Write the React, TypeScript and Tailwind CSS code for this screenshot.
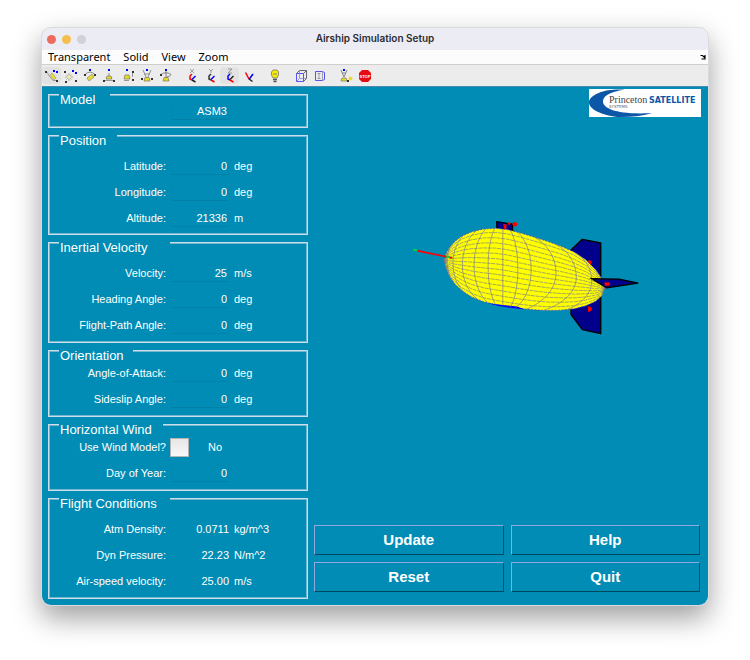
import type { ReactNode } from "react";

type Row = {
  label: string;
  value: string;
  unit?: string;
  kind?: "static" | "check";
};

type PanelData = {
  title: string;
  legend: string;
  pad: string;
  rows: Row[];
};

const panels: PanelData[] = [
  {
    title: "Model",
    legend: "w-[51px]",
    pad: "pt-[3px] pb-[3px]",
    rows: [{ label: "", value: "ASM3" }],
  },
  {
    title: "Position",
    legend: "w-[58px]",
    pad: "pt-[17px] pb-[3px]",
    rows: [
      { label: "Latitude:", value: "0", unit: "deg" },
      { label: "Longitude:", value: "0", unit: "deg" },
      { label: "Altitude:", value: "21336", unit: "m" },
    ],
  },
  {
    title: "Inertial Velocity",
    legend: "w-[111px]",
    pad: "pt-[17px] pb-[4px]",
    rows: [
      { label: "Velocity:", value: "25", unit: "m/s" },
      { label: "Heading Angle:", value: "0", unit: "deg" },
      { label: "Flight-Path Angle:", value: "0", unit: "deg" },
    ],
  },
  {
    title: "Orientation",
    legend: "w-[74px]",
    pad: "pt-[9px] pb-[4px]",
    rows: [
      { label: "Angle-of-Attack:", value: "0", unit: "deg" },
      { label: "Sideslip Angle:", value: "0", unit: "deg" },
    ],
  },
  {
    title: "Horizontal Wind",
    legend: "w-[104px]",
    pad: "pt-[9px] pb-[4px]",
    rows: [
      { label: "Use Wind Model?", value: "No", kind: "check" },
      { label: "Day of Year:", value: "0" },
    ],
  },
  {
    title: "Flight Conditions",
    legend: "w-[111px]",
    pad: "pt-[17px] pb-[4px]",
    rows: [
      { label: "Atm Density:", value: "0.0711", unit: "kg/m^3", kind: "static" },
      { label: "Dyn Pressure:", value: "22.23", unit: "N/m^2", kind: "static" },
      { label: "Air-speed velocity:", value: "25.00", unit: "m/s", kind: "static" },
    ],
  },
];

function Field({ row, id }: { row: Row; id: string }) {
  return (
    <div className="flex h-[26px] items-center">
      <label htmlFor={id} className="w-[117px] shrink-0 text-right whitespace-nowrap">
        {row.label}
      </label>
      {row.kind === "check" ? (
        <>
          <input
            id={id}
            type="checkbox"
            className="ml-1 size-[19px] appearance-none border border-[#b5b5b5] bg-linear-to-b from-[#e6e6e6] to-[#f8f8f8]"
          />
          <span className="ml-[19px]">{row.value}</span>
        </>
      ) : row.kind === "static" ? (
        <output id={id} className="ml-1 w-[59px] text-right">
          {row.value}
        </output>
      ) : (
        <input
          id={id}
          aria-label={row.label || "Model name"}
          defaultValue={row.value}
          className="ml-[5px] h-[18px] w-[58px] border border-[#0089b1] border-b-[#0081a7] bg-transparent pr-px text-right outline-none"
        />
      )}
      {row.unit && <span className="ml-[5px]">{row.unit}</span>}
    </div>
  );
}

function Panel({ panel }: { panel: PanelData }) {
  return (
    <fieldset
      className={`relative min-w-0 border border-[#cbdfea] shadow-[inset_0_0_0_1px_#74b6d0] ${panel.pad}`}
    >
      <legend
        className={`absolute -top-px left-[10px] bg-[#008cb4] pl-px text-[13px] leading-[12px] whitespace-nowrap ${panel.legend}`}
      >
        {panel.title}
      </legend>
      {panel.rows.map((row, i) => (
        <Field key={i} row={row} id={`${panel.title.replace(/ /g, "-")}-${i}`} />
      ))}
    </fieldset>
  );
}

/* Hull silhouette, sampled as upper and lower edges along x. */
const upper: [number, number][] = [
  [133, 180], [137, 160], [148, 140], [165, 122], [185, 107], [215, 94], [250, 86], [285, 84],
  [320, 88], [360, 98], [400, 110], [440, 123], [480, 137], [520, 155], [555, 178], [585, 208],
  [604, 236], [612, 262],
];
const lower: [number, number][] = [
  [133, 180], [137, 203], [148, 229], [165, 252], [185, 271], [215, 290], [250, 304], [285, 312],
  [320, 318], [360, 324], [400, 328], [440, 330], [480, 329], [520, 325], [555, 316], [585, 302],
  [604, 285], [612, 262],
];

function edge(points: [number, number][], x: number) {
  for (let i = 1; i < points.length; i++) {
    const [x0, y0] = points[i - 1];
    const [x1, y1] = points[i];
    if (x <= x1) return y0 + ((y1 - y0) * (x - x0)) / (x1 - x0);
  }
  return points[points.length - 1][1];
}

const hull = [...upper, ...[...lower].reverse()].map((p) => p.join(",")).join(" ");

const stringers = Array.from({ length: 14 }, (_, i) => {
  const f = (i + 0.8) / 14.6;
  return upper
    .map(([x]) => `${x},${(edge(upper, x) + f * (edge(lower, x) - edge(upper, x))).toFixed(1)}`)
    .join(" ");
});

/* Each ring: x at its upper end, x of the bulge, x at its lower end. */
const rings = [
  [160, 140, 156], [190, 158, 192], [228, 186, 232], [256, 221, 262], [283, 263, 285],
  [307, 307, 307], [330, 352, 330], [352, 392, 346], [402, 466, 378], [465, 527, 430], [520, 573, 500],
].map(([a, m, b]) => {
  const ya = edge(upper, a);
  const yb = edge(lower, b);
  const h = yb - ya;
  const ym = ya + h * 0.5;
  return `M${a} ${ya}C${a + (m - a) * 0.6} ${ya + h * 0.1} ${m} ${ym - h * 0.22} ${m} ${ym}S${b + (m - b) * 0.6} ${yb - h * 0.1} ${b} ${yb}`;
});

function Airship() {
  return (
    <svg
      viewBox="314 117 386 407"
      role="img"
      aria-label="Airship model"
      className="h-0 w-full flex-1"
    >
      <g transform="translate(400 200) scale(.33333)">
        <g fill="#00008b" stroke="#000" strokeWidth="4" strokeLinejoin="round">
          <path d="M289 64L336 72V96L289 88Z" />
          <path d="M511 200V149L545 117L600 128V250Z" />
          <path d="M511 300V342L545 387L600 399V280Z" />
        </g>
        <polygon points={hull} fill="#ff0" stroke="#5050c0" strokeWidth="2.5" strokeDasharray="6 4" />
        <g fill="#f00">
          <circle cx="343" cy="72" r="7" />
          <circle cx="326" cy="70" r="4" />
          <path d="M308 72h10v12l-7 4z" />
          <path d="M561 182q6-6 12 2l-2 10z" />
          <path d="M562 317l11 4v9l-11 5z" />
        </g>
        <path d="M262 308Q310 322 372 326L350 318L300 313Z" fill="#00f" />
        <g fill="none" stroke="#7c7c88" strokeWidth="2">
          {stringers.map((p, i) => (
            <polyline key={i} points={p} strokeDasharray="12 2" />
          ))}
        </g>
        <g fill="none" stroke="#77779a" strokeWidth="2">
          {rings.map((d, i) => (
            <path key={i} d={d} />
          ))}
        </g>
        <path d="M573 235L655 236L712 248L618 262Z" fill="#00008b" stroke="#000" strokeWidth="4" />
        <path d="M610 246h18l-3 10h-12z" fill="#f00" />
        <path d="M50 151L156 173" stroke="#f00" strokeWidth="5" />
        <path d="M39 148L51 151M138 169L148 171" stroke="#0d3" strokeWidth="5" />
      </g>
    </svg>
  );
}

const dot = (x: number, y: number, fill = "#333", s = 2) => (
  <rect key={`${x}-${y}`} x={x} y={y} width={s} height={s} fill={fill} />
);

function axes(letter: "X" | "Y" | "Z") {
  const hook = { X: "#f00", Y: "#333", Z: "#00f" }[letter];
  const arm = { X: "#00f", Y: "#00f", Z: "#222" }[letter];
  const foot = { X: "#222", Y: "#f00", Z: "#f00" }[letter];
  const glyph = { X: "M6 1L10 5M10 1L6 5", Y: "M6 1L8 3L10 1M8 3V5", Z: "M6 1H10L6 5H10" }[letter];
  return (
    <g fill="none" strokeWidth="1.500">
      <path d={glyph} stroke="#888" strokeWidth=".8" />
      <path d="M8 6L6 8V11L8 12" stroke={hook} />
      <path d="M11.500 8L8 11.500" stroke={arm} />
      <path d="M8 12L11.500 14" stroke={foot} />
    </g>
  );
}

const yellow = "#e8dc28";

const icons: { name: string; on?: boolean; art: ReactNode }[][] = [
  [
    {
      name: "Orbit camera",
      on: true,
      art: (
        <>
          <path d="M2.500 3.500L6 9L9 12.500H13" fill="none" stroke="#999" />
          <path d="M6 7L8 5L12 10L10 12Z" fill={yellow} stroke="#998" strokeWidth=".6" />
          {dot(1, 3)}{dot(12, 12)}{dot(9, 2, "#00f")}{dot(12, 3, "#00f")}
        </>
      ),
    },
    {
      name: "Orbit scene light",
      art: (
        <>
          <path d="M6 5V13M2 9H10M3.500 6.500L8.500 11.500M8.500 6.500L3.500 11.500" stroke="#888" strokeWidth=".7" />
          <circle cx="6" cy="9" r="1.800" fill="#f4f0a0" />
          {dot(1, 3)}{dot(2, 13)}{dot(12, 12)}{dot(9, 2, "#00f")}{dot(12, 4, "#00f")}
        </>
      ),
    },
    {
      name: "Pan or tilt camera",
      art: (
        <>
          <path d="M2.500 7Q8 1 13.500 7" fill="none" stroke="#888" />
          <path d="M5 10L10 6L12 9L7 13Z" fill={yellow} stroke="#887" strokeWidth=".7" />
          {dot(7, 1, "#00f")}{dot(2, 6)}{dot(12, 6)}
        </>
      ),
    },
    {
      name: "Move camera horizontally",
      art: (
        <>
          <path d="M3 12.500H13" stroke="#999" />
          <path d="M6 8H10L11 11H5Z" fill={yellow} stroke="#776" strokeWidth=".7" />
          <path d="M8 5V8" stroke="#888" />
          {dot(7, 1, "#00f")}{dot(2, 12)}{dot(12, 12)}
        </>
      ),
    },
    {
      name: "Move camera forward",
      art: (
        <>
          <path d="M5 7H9L10 11H4Z" fill={yellow} stroke="#776" strokeWidth=".7" />
          <path d="M12.500 4V9M4 12.500H9" stroke="#999" />
          {dot(6, 1, "#00f")}{dot(12, 3)}{dot(12, 11)}
        </>
      ),
    },
    {
      name: "Zoom camera",
      art: (
        <>
          <path d="M4 2L7 9M12 2L9 9M5 6H11" stroke="#888" strokeWidth=".9" fill="none" />
          <path d="M6 9.500H10L11 13H5Z" fill={yellow} stroke="#776" strokeWidth=".7" />
          {dot(7, 1, "#00f")}{dot(2, 10)}{dot(12, 10)}
        </>
      ),
    },
    {
      name: "Roll camera",
      art: (
        <>
          <path d="M3 6.500Q8 3 13 6.500Q12 9 8.500 9M8 3V10" fill="none" stroke="#777" strokeWidth=".9" />
          <path d="M6 9.500H10L11 13H5Z" fill={yellow} stroke="#776" strokeWidth=".7" />
          {dot(7, 1, "#00f")}{dot(2, 6)}
        </>
      ),
    },
  ],
  [
    { name: "Principal axis X", art: axes("X") },
    { name: "Principal axis Y", art: axes("Y") },
    { name: "Principal axis Z", on: true, art: axes("Z") },
    {
      name: "No principal axis",
      art: (
        <g strokeWidth="1.500" fill="none">
          <path d="M4.500 4.500L8 11" stroke="#f00" />
          <path d="M12 6L8 11.500" stroke="#00f" />
          <path d="M8 11L11.500 13.500" stroke="#222" />
        </g>
      ),
    },
  ],
  [
    {
      name: "Scene light",
      art: (
        <>
          <path d="M6 10L4.500 7V4L6 2H10L11.500 4V7L10 10Z" fill="#f5ee00" stroke="#776" strokeWidth=".8" />
          <path d="M6 6H10" stroke="#886" />
          <path d="M6 11.500H10M6.500 13.500H9.500" stroke="#555" strokeWidth="1.400" />
        </>
      ),
    },
  ],
  [
    {
      name: "Orthographic projection",
      art: (
        <g fill="none">
          <path d="M3.500 5.500H10.500V13.500H3.500Z" stroke="#55e" />
          <path d="M3.500 5.500L6.500 2.500H13.500V10.500L10.500 13.500M10.500 5.500L13.500 2.500" stroke="#667" />
          <path d="M6.500 3V10.500H13M6.500 10.500L3.500 13.500" stroke="#77e" strokeWidth=".7" />
        </g>
      ),
    },
    {
      name: "Perspective projection",
      art: (
        <g fill="none">
          <path d="M3.500 3.500H10.500L12.500 4.500V11.500L10.500 12.500H3.500Z" stroke="#55e" />
          <path d="M10.500 3.500V12.500M7 5V11M5.500 5.500H8.500M5.500 10.500H8.500" stroke="#88a" strokeWidth=".8" />
        </g>
      ),
    },
  ],
  [
    {
      name: "Reset camera and light",
      art: (
        <>
          <path d="M3 2L6 9L9 2M4 5H8" stroke="#888" fill="none" />
          <path d="M4 10H8L9 13H3Z" fill={yellow} stroke="#776" strokeWidth=".7" />
          <circle cx="12.500" cy="10.500" r="2" fill={yellow} />
          {dot(5, 1, "#00f")}{dot(9, 12)}
        </>
      ),
    },
    {
      name: "Stop",
      art: (
        <>
          <path d="M5 2H11L14 5V11L11 14H5L2 11V5Z" fill="#e60a12" />
          <text x="8" y="10" fontSize="4" fontWeight="bold" textAnchor="middle" fill="#fff">
            STOP
          </text>
        </>
      ),
    },
  ],
];

function Toolbar() {
  return (
    <div
      role="toolbar"
      className="flex h-[22px] items-center gap-[7px] border-b border-[#4a8caf] bg-[#ececec]"
    >
      {icons.map((group, g) => (
        <div key={g} className="flex">
          {group.map((icon) => (
            <button
              key={icon.name}
              type="button"
              aria-label={icon.name}
              className={`flex h-[17px] w-[19px] items-center justify-center rounded-sm ${icon.on ? "bg-[#e2e2e2]" : ""}`}
            >
              <svg viewBox="0 0 16 16" className="size-4">
                {icon.art}
              </svg>
            </button>
          ))}
        </div>
      ))}
    </div>
  );
}

function Logo() {
  return (
    <svg
      viewBox="0 0 112 28"
      role="img"
      aria-label="Princeton Satellite Systems"
      className="h-7 w-28 self-end bg-white"
    >
      <path
        d="M36 0.500C20 3 14 7 14 12.500C14 20 30 26 63 24C53 27 42 28 33 28H28C12 26 0 20 0 13.500C0 7 12 1 27 0.500Z"
        fill="#0c56a8"
      />
      <text x="20" y="14" fontSize="10" fontFamily="'Liberation Serif', serif" fill="#444">
        Princeton
      </text>
      <text
        x="60"
        y="14"
        fontSize="8"
        fontWeight="bold"
        fontFamily="'DejaVu Sans', sans-serif"
        fill="#0c56a8"
      >
        SATELLITE
      </text>
      <text x="20" y="19" fontSize="4" fontFamily="'DejaVu Sans', sans-serif" fill="#666">
        SYSTEMS
      </text>
    </svg>
  );
}

export default function App() {
  return (
    <main className="min-h-screen bg-white px-[41px] pt-[27px] pb-[55px] font-['Liberation_Sans',Arial,sans-serif]">
      <div className="overflow-hidden rounded-[10px] border border-[#d9dbe0] bg-[#ecedf4] shadow-[0_12px_28px_rgba(0,0,0,0.38)]">
        <header className="relative flex h-[22px] items-center justify-center">
          <div className="absolute left-[5px] flex gap-[6px]">
            <button type="button" aria-label="Close" className="size-[9px] rounded-full bg-[#ec6a5e]" />
            <button type="button" aria-label="Minimize" className="size-[9px] rounded-full bg-[#f4bf4f]" />
            <button type="button" aria-label="Zoom" className="size-[9px] rounded-full bg-[#d1d1d6]" />
          </div>
          <h1 className="pb-px font-['Inter',sans-serif] text-[10px] font-semibold text-[#2b2b30]">
            Airship Simulation Setup
          </h1>
        </header>
        <nav className="flex h-[15px] items-center gap-[13px] border-b border-[#cfcfcf] bg-[#fcfcfc] pl-[6px] font-['Noto_Sans',sans-serif] text-[11px] leading-[14px] text-black">
          <button type="button">Transparent</button>
          <button type="button">Solid</button>
          <button type="button">View</button>
          <button type="button">Zoom</button>
          <button type="button" aria-label="Dock" className="mr-[2px] ml-auto">
            <svg viewBox="0 0 6 6" className="size-[6px]">
              <path d="M0.500 1.500H2.500L4.500 3.500M5 1V5H1.500" fill="none" stroke="#000" strokeWidth="1.200" />
            </svg>
          </button>
        </nav>
        <Toolbar />
        <div className="flex gap-[6px] bg-[#008cb4] pr-[7px] pl-[6px] text-[11px] leading-[14px] text-white">
          <form className="flex w-[260px] shrink-0 flex-col gap-[7px] pt-[7px] pb-[5px]">
            {panels.map((panel) => (
              <Panel key={panel.title} panel={panel} />
            ))}
          </form>
          <section className="flex min-w-0 flex-1 flex-col pt-[2px] pb-[13px]">
            <Logo />
            <Airship />
            <div className="grid grid-cols-2 gap-[7px] pr-px">
              {["Update", "Help", "Reset", "Quit"].map((name) => (
                <button
                  key={name}
                  type="button"
                  className="h-[30px] border border-t-[#8fa6e0] border-r-[#00546e] border-b-[#00465c] border-l-[#8fa6e0] text-[15px] font-bold"
                >
                  {name}
                </button>
              ))}
            </div>
          </section>
        </div>
      </div>
    </main>
  );
}
